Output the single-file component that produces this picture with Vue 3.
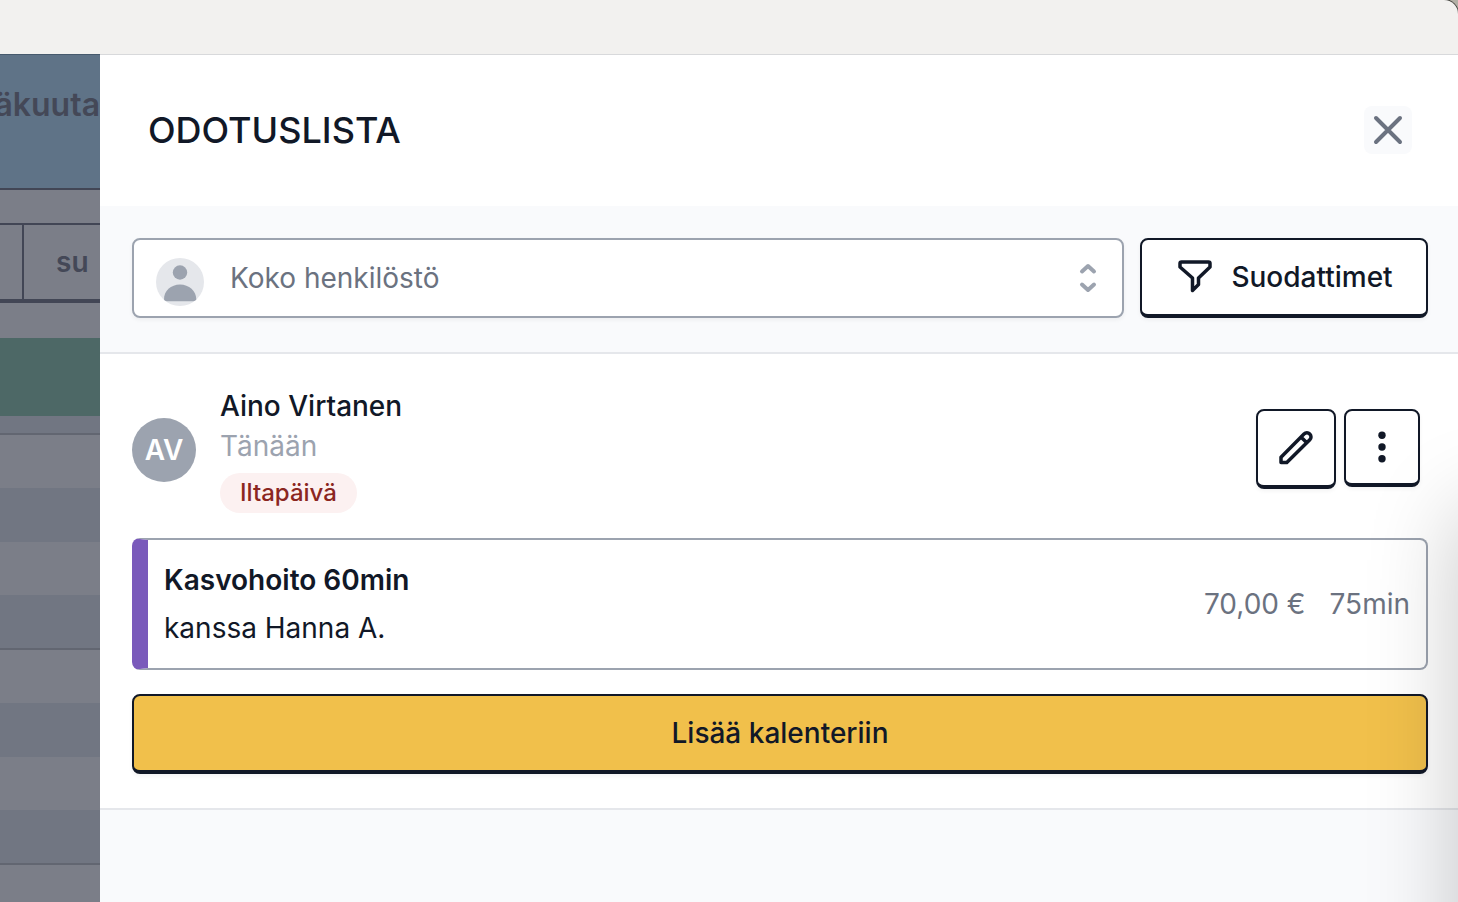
<script setup>
import { ref } from 'vue'

const staff = ref('all')
const hours = [0, 1, 2]
</script>

<template>
  <div class="page">
    <div class="chrome"><div class="chrome-bar"></div></div>
    <div class="body">
      <div class="calendar" aria-hidden="true">
        <div class="cal-head">äkuuta</div>
        <div class="cal-gap"></div>
        <div class="cal-days"><div class="cal-day"></div><div class="cal-day su">su</div></div>
        <div class="cal-gap"></div>
        <div class="cal-event"></div>
        <div class="cal-strip"></div>
        <div v-for="h in hours" :key="h" class="cal-hour"><i></i><i></i><i></i><i></i></div>
      </div>

      <main class="panel">
        <header class="head">
          <h1>ODOTUSLISTA</h1>
          <button class="close" aria-label="Sulje">
            <svg viewBox="0 0 48 48" width="48" height="48"><path d="M12 12 36 36M36 12 12 36" fill="none" stroke="currentColor" stroke-width="4" stroke-linecap="round" /></svg>
          </button>
        </header>

        <div class="filters">
          <div class="picker">
            <select v-model="staff" aria-label="Henkilöstö">
              <option value="all">Koko henkilöstö</option>
            </select>
            <svg class="person" viewBox="0 0 48 48" width="48" height="48">
              <circle cx="24" cy="24" r="24" fill="#e5e7eb" />
              <circle cx="24" cy="14.500" r="7.200" fill="#9ca3af" />
              <path d="M8 41.500C7.700 33 15 26.500 24 26.500S40.300 33 40.300 41.500Q39.500 43.300 37 43.300H11Q8.500 43.300 8 41.500Z" fill="#9ca3af" />
            </svg>
            <svg class="arrows" viewBox="0 0 40 40" width="40" height="40"><path d="M14 13.500 20 8 26 13.500M14 26.500 20 32 26 26.500" fill="none" stroke="#9ca3af" stroke-width="4" stroke-linecap="round" stroke-linejoin="round" /></svg>
          </div>
          <button class="btn filter-btn">
            <svg viewBox="0 0 40 40" width="40" height="40"><path d="M6.500 5H33.500Q35 5 35 6.500V10L23.500 21V27.500L17.500 33.500V21L5 10V6.500Q5 5 6.500 5Z" fill="none" stroke="currentColor" stroke-width="3.500" stroke-linejoin="round" /></svg>
            Suodattimet
          </button>
        </div>

        <section class="entry">
          <div class="client">
            <div class="avatar">AV</div>
            <div class="info">
              <div class="name">Aino Virtanen</div>
              <div class="when">Tänään</div>
              <span class="badge">Iltapäivä</span>
            </div>
            <div class="actions">
              <button class="btn edit" aria-label="Muokkaa">
                <svg viewBox="0 0 40 40" width="40" height="40"><path d="M5 34.500V29.200L28 6A4.100 4.100 0 0 1 33.800 11.800L10.800 34.500ZM25 9 30.800 14.800" fill="none" stroke="currentColor" stroke-width="3.500" stroke-linejoin="round" /></svg>
              </button>
              <button class="btn more" aria-label="Lisää">
                <svg viewBox="0 0 40 40" width="40" height="40" fill="currentColor"><circle cx="20" cy="8.300" r="3.700" /><circle cx="20" cy="20" r="3.700" /><circle cx="20" cy="31.700" r="3.700" /></svg>
              </button>
            </div>
          </div>

          <div class="service">
            <div class="what">
              <strong>Kasvohoito 60min</strong>
              <span>kanssa Hanna A.</span>
            </div>
            <div class="cost"><span>70,00 €</span><span>75min</span></div>
          </div>

          <button class="btn add">Lisää kalenteriin</button>
        </section>
      </main>
    </div>
    <div class="window-shade"></div>
  </div>
</template>

<style>
body {
  margin: 0;
}
</style>

<style scoped>
.page {
  position: relative;
  display: flex;
  flex-direction: column;
  min-height: 100vh;
  overflow: hidden;
  font-family: Inter, "Liberation Sans", sans-serif;
  font-size: 28px;
  line-height: 40px;
  color: #111827;
}
.page * {
  box-sizing: border-box;
}
.chrome {
  overflow: hidden;
  background: #b3b0a6;
}
.chrome-bar {
  height: 54px;
  background: #f2f1ef;
  border-top-right-radius: 14px;
  box-shadow: 0 0 0 1px #44443f;
}
.body {
  flex: 1;
  display: grid;
  grid-template-columns: 100px 1fr;
}
.calendar {
  height: calc(100vh - 54px);
  overflow: hidden;
  background: #7b7e88;
  color: #444857;
  font-weight: 600;
}
.cal-head {
  display: flex;
  justify-content: flex-end;
  height: 136px;
  padding-top: 30px;
  background: #5f7387;
  border-top: 1px solid #475a6d;
  border-bottom: 2px solid #424655;
  font-size: 32px;
}
.cal-gap {
  height: 33px;
}
.cal-days {
  display: grid;
  grid-template-columns: 22px 1fr;
  height: 80px;
  border-top: 2px solid #424655;
  border-bottom: 4px solid #424655;
}
.su {
  border-left: 2px solid #424655;
  padding: 17px 0 0 32px;
}
.cal-days + .cal-gap {
  height: 35px;
}
.cal-event {
  height: 78px;
  background: #4d6866;
}
.cal-strip {
  height: 19px;
  background: #717682;
  border-bottom: 2px solid #626671;
}
.cal-hour {
  display: grid;
  grid-template-rows: 53px 54px 53px 53px;
  border-bottom: 2px solid #626671;
}
.cal-hour i:nth-child(even) {
  background: #717682;
}
.panel {
  min-width: 0;
  background: #f9fafc;
}
.head {
  display: flex;
  align-items: center;
  justify-content: space-between;
  height: 152px;
  padding: 0 46px 2px 48px;
  background: #fff;
  border-top: 1px solid #d8d9db;
}
h1 {
  margin: 0;
  font-size: 36px;
  font-weight: 500;
}
button {
  font: inherit;
  color: inherit;
  cursor: pointer;
}
svg {
  display: block;
  flex: none;
}
.close {
  width: 48px;
  height: 48px;
  padding: 0;
  border: 0;
  border-radius: 8px;
  background: #f9fafc;
  color: #6b7280;
}
.filters {
  display: flex;
  gap: 16px;
  padding: 32px 30px 34px 32px;
  border-bottom: 2px solid #e5e7eb;
}
.picker {
  position: relative;
  flex: 1;
}
select {
  appearance: none;
  display: block;
  width: 100%;
  height: 80px;
  padding: 0 80px 0 96px;
  border: 2px solid #9ca3af;
  border-radius: 8px;
  background: #fff;
  box-shadow: 0 2px 4px rgba(0, 0, 0, 0.05);
  font: inherit;
  color: #6b7280;
}
.person {
  position: absolute;
  left: 24px;
  top: 20px;
  pointer-events: none;
}
.arrows {
  position: absolute;
  right: 16px;
  top: 20px;
  pointer-events: none;
}
.btn {
  display: flex;
  align-items: center;
  justify-content: center;
  height: 80px;
  padding: 0;
  border: 2px solid #111827;
  border-bottom-width: 4px;
  border-radius: 8px;
  background: #fff;
  box-shadow: 0 2px 4px rgba(0, 0, 0, 0.05);
  font-weight: 500;
}
.filter-btn {
  gap: 16px;
  min-width: 288px;
  padding: 0 32px;
}
.entry {
  padding: 32px 30px 34px 32px;
  background: #fff;
  border-bottom: 2px solid #e5e7eb;
}
.client {
  display: flex;
  align-items: center;
  gap: 24px;
}
.avatar {
  width: 64px;
  height: 64px;
  border-radius: 50%;
  background: #9ca3af;
  color: #fff;
  font-weight: 600;
  line-height: 64px;
  text-align: center;
}
.info {
  flex: 1;
}
.name {
  font-weight: 500;
}
.when {
  color: #9ca3af;
}
.badge {
  display: block;
  width: fit-content;
  margin-top: 7px;
  padding: 0 20px;
  border-radius: 20px;
  background: #fcf1f1;
  color: #8b2621;
  font-size: 24px;
  font-weight: 500;
}
.actions {
  display: flex;
  align-items: flex-start;
  gap: 8px;
  padding: 0 8px 1px 0;
}
.edit {
  width: 80px;
}
.more {
  width: 76px;
  height: 78px;
}
.service {
  display: flex;
  align-items: center;
  justify-content: space-between;
  margin: 25px 0 24px;
  padding: 16px;
  border: 2px solid #9ca3af;
  border-left: 16px solid #7a5abb;
  border-radius: 8px;
  line-height: 48px;
}
.what {
  display: flex;
  flex-direction: column;
}
strong {
  font-weight: 600;
}
.cost {
  display: flex;
  gap: 24px;
  color: #6b7280;
}
.add {
  width: 100%;
  background: #f1c04b;
}
.window-shade {
  position: absolute;
  left: 100%;
  top: 510px;
  bottom: -200px;
  width: 200px;
  box-shadow: 0 0 90px rgba(0, 0, 0, 0.22);
  pointer-events: none;
}
</style>
